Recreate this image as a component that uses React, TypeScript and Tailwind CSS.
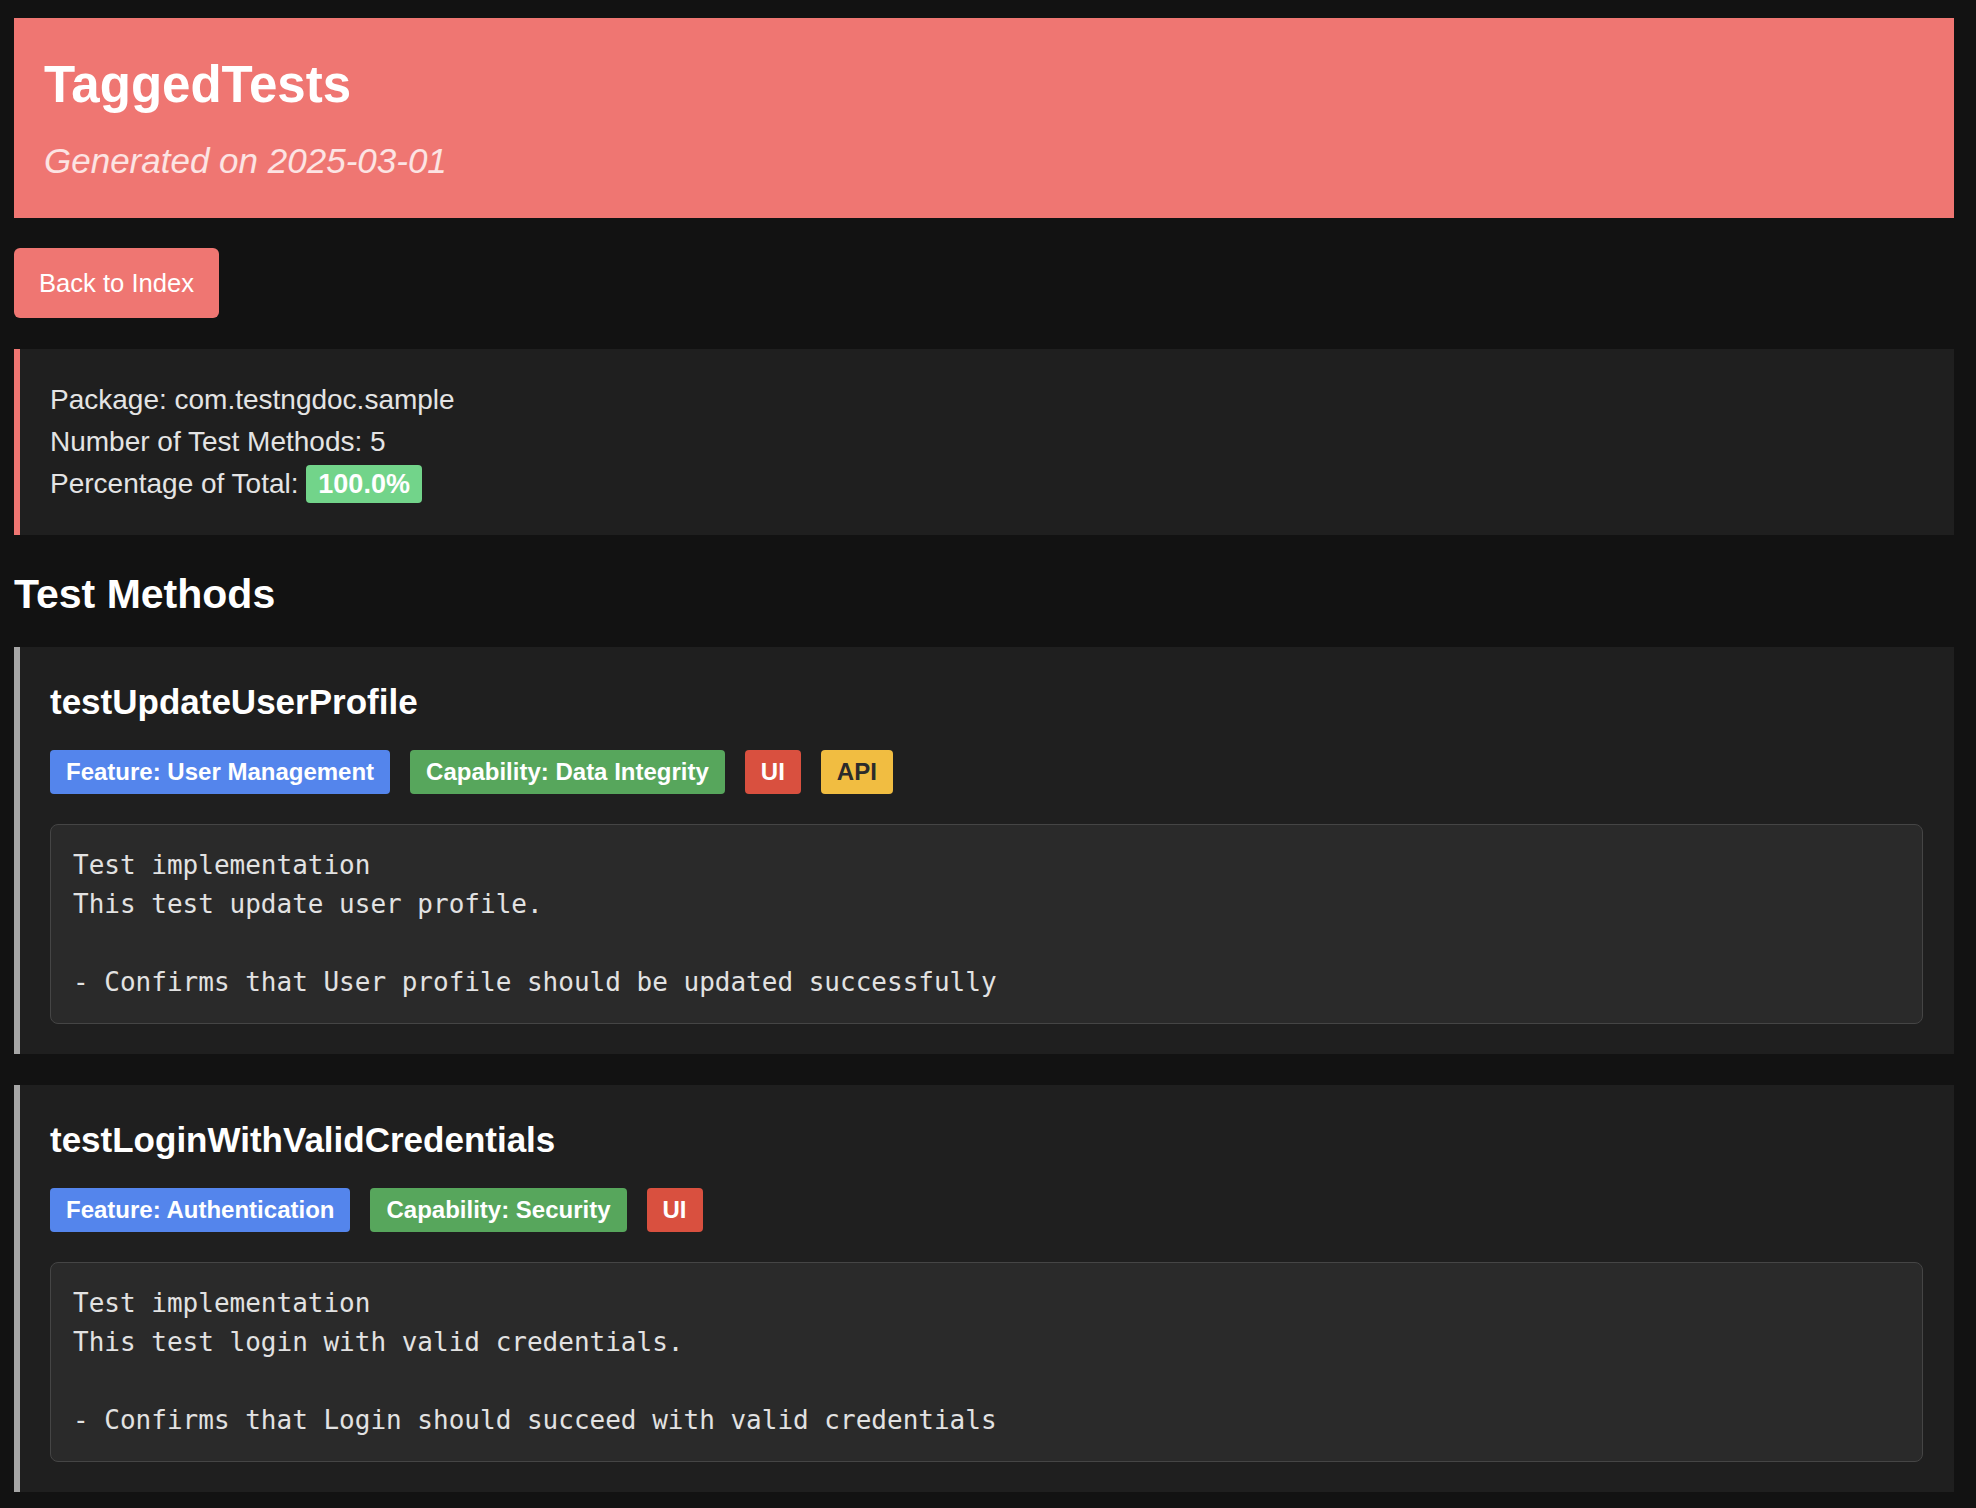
const sans = "font-['Liberation_Sans',Arial,Helvetica,sans-serif]";

type Tag = { label: string; cls: string };

const methods: { name: string; tags: Tag[]; body: string }[] = [
  {
    name: "testUpdateUserProfile",
    tags: [
      { label: "Feature: User Management", cls: "bg-[#5485ec] text-white" },
      { label: "Capability: Data Integrity", cls: "bg-[#57a65c] text-white" },
      { label: "UI", cls: "bg-[#d9503f] text-white" },
      { label: "API", cls: "bg-[#f1bd41] text-[#2b2b2b]" },
    ],
    body: "Test implementation\nThis test update user profile.\n\n- Confirms that User profile should be updated successfully",
  },
  {
    name: "testLoginWithValidCredentials",
    tags: [
      { label: "Feature: Authentication", cls: "bg-[#5485ec] text-white" },
      { label: "Capability: Security", cls: "bg-[#57a65c] text-white" },
      { label: "UI", cls: "bg-[#d9503f] text-white" },
    ],
    body: "Test implementation\nThis test login with valid credentials.\n\n- Confirms that Login should succeed with valid credentials",
  },
];

function MethodCard({ name, tags, body }: { name: string; tags: Tag[]; body: string }) {
  return (
    <div className="bg-[#1f1f1f] border-l-[6px] border-[#a6a6a6] pt-[35px] pb-[30px] pl-[30px] pr-[31px]">
      <h3 className="text-[35px] font-bold text-white leading-[40px]">{name}</h3>
      <div className="flex flex-row gap-[20px] mt-[28px]">
        {tags.map((t) => (
          <span
            key={t.label}
            className={`${t.cls} h-[44px] px-[16px] rounded-[4px] flex items-center text-[24px] font-bold`}
          >
            {t.label}
          </span>
        ))}
      </div>
      <pre className="mt-[30px] bg-[#2a2a2a] border border-[#454545] rounded-[8px] px-[22px] py-[21px] font-['DejaVu_Sans_Mono',Menlo,monospace] text-[26px] leading-[39px] text-[#e2e2e2] whitespace-pre">
        {body}
      </pre>
    </div>
  );
}

export default function App() {
  return (
    <div className={`${sans} min-h-screen bg-[#121212] pt-[18px] pl-[14px] pr-[22px] pb-[20px]`}>
      <div className="bg-[#ef7672] pt-[38px] pb-[37px] px-[30px]">
        <h1 className="text-[51px] font-bold text-white leading-[58px]">TaggedTests</h1>
        <p className="mt-[27px] text-[35px] italic text-white/80 leading-[40px]">
          Generated on 2025-03-01
        </p>
      </div>

      <div className="mt-[30px]">
        <a
          href="#"
          className="inline-flex items-center h-[70px] px-[25px] rounded-[6px] bg-[#ef7672] text-white text-[25.6px]"
        >
          Back to Index
        </a>
      </div>

      <div className="mt-[31px] bg-[#1f1f1f] border-l-[6px] border-[#ef7672] py-[30px] px-[30px] text-[28px] leading-[42px] text-[#e4e4e4]">
        <div>Package: com.testngdoc.sample</div>
        <div>Number of Test Methods: 5</div>
        <div>
          Percentage of Total:{" "}
          <span className="inline-block bg-[#72d48a] text-white font-bold text-[27px] leading-[30px] px-[12px] py-[4px] rounded-[4px]">
            100.0%
          </span>
        </div>
      </div>

      <h2 className="mt-[36px] text-[41px] font-bold text-white leading-[47px]">Test Methods</h2>

      <div className="mt-[29px] flex flex-col gap-[31px]">
        {methods.map((m) => (
          <MethodCard key={m.name} {...m} />
        ))}
      </div>
    </div>
  );
}
